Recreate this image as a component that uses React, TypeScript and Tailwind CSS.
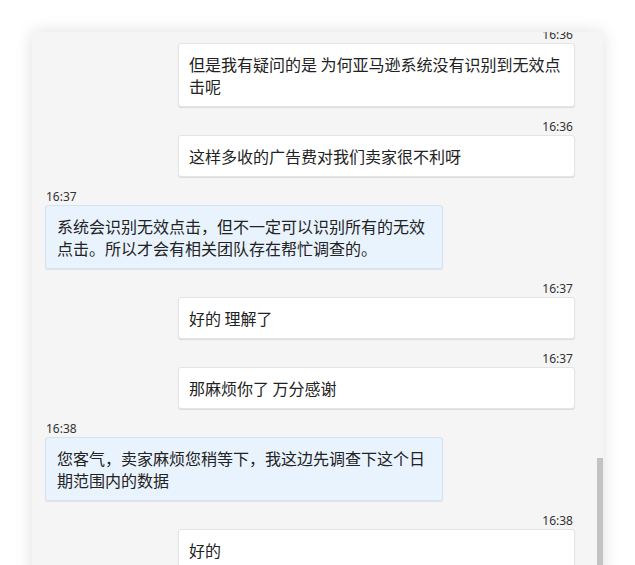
import React from "react";

type Msg = { side: "left" | "right"; time: string; lines: string[] };

const msgs: Msg[] = [
  { side: "right", time: "16:36", lines: ["但是我有疑问的是 为何亚马逊系统没有识别到无效点", "击呢"] },
  { side: "right", time: "16:36", lines: ["这样多收的广告费对我们卖家很不利呀"] },
  { side: "left", time: "16:37", lines: ["系统会识别无效点击，但不一定可以识别所有的无效", "点击。所以才会有相关团队存在帮忙调查的。"] },
  { side: "right", time: "16:37", lines: ["好的 理解了"] },
  { side: "right", time: "16:37", lines: ["那麻烦你了 万分感谢"] },
  { side: "left", time: "16:38", lines: ["您客气，卖家麻烦您稍等下，我这边先调查下这个日", "期范围内的数据"] },
  { side: "right", time: "16:38", lines: ["好的"] },
];

function Message({ m }: { m: Msg }) {
  const right = m.side === "right";
  return (
    <div className={`flex flex-col mb-[10px] ${right ? "items-end" : "items-start"}`}>
      <div
        className={`text-[12px] leading-[16px] pt-[2px] text-[#333] ${right ? "pr-[2px]" : "pl-[1px]"}`}
        style={{ fontFamily: '"Noto Sans", "Open Sans", sans-serif' }}
      >
        {m.time}
      </div>
      <div
        className={`rounded-[3px] border py-[9px] text-[16px] leading-[22px] text-[#222] whitespace-nowrap ${
          right
            ? "w-[397px] bg-white border-[#e4e4e4] px-[10px] shadow-[0_1px_1px_rgba(0,0,0,0.10)]"
            : "w-[398px] bg-[#e9f3fd] border-[#d5e3f0] px-[11px] shadow-[0_1px_1px_rgba(0,0,0,0.08)]"
        }`}
      >
        {m.lines.map((l, i) => (
          <div key={i}>{l}</div>
        ))}
      </div>
    </div>
  );
}

export default function App() {
  return (
    <div
      className="w-[635px] h-[565px] bg-white overflow-hidden pt-[32px] pl-[32px]"
      style={{ fontFamily: '"Noto Sans CJK SC", "Noto Sans", sans-serif' }}
    >
      <div className="w-[571px] h-[560px] bg-[#f5f5f6] flex shadow-[0_0_16px_rgba(0,0,0,0.13)]">
        <div className="flex-1 overflow-hidden pl-[13px] pr-[22px]">
          <div className="-mt-[7px] flex flex-col">
            {msgs.map((m, i) => (
              <Message key={i} m={m} />
            ))}
          </div>
        </div>
        <div className="w-[6px] pt-[426px] flex flex-col">
          <div className="flex-1 bg-[#c3c3c3]" />
        </div>
      </div>
    </div>
  );
}
